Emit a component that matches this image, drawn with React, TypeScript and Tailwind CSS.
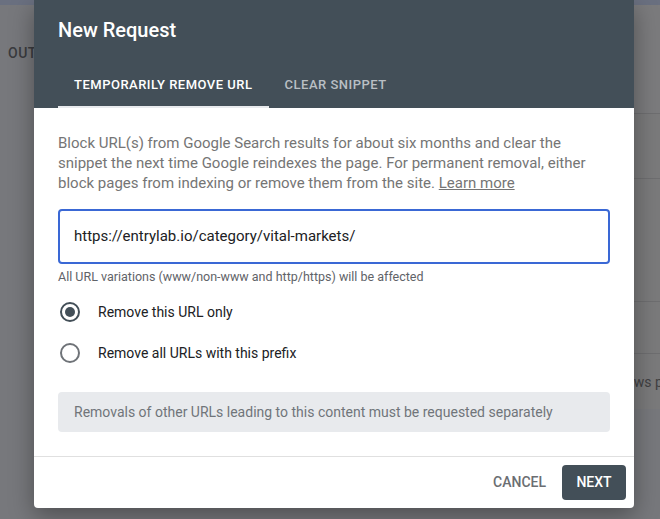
import { useState } from "react"

const font = { fontFamily: "Roboto, 'Noto Sans', Arial, sans-serif" }

const options = [
  { id: "url", label: "Remove this URL only" },
  { id: "prefix", label: "Remove all URLs with this prefix" },
]

const Radio = ({ checked }: { checked: boolean }) => (
  <span
    className={
      checked
        ? "flex size-5 items-center justify-center rounded-full border-2 border-[#434f58]"
        : "flex size-5 items-center justify-center rounded-full border-2 border-[#6f7378]"
    }
  >
    {checked ? <span className="size-2.5 rounded-full bg-[#434f58]" /> : null}
  </span>
)

const Backdrop = () => (
  <div className="flex h-full flex-col bg-[#77787c]">
    <div className="h-[5px] bg-[#6a7080]" />
    <div className="flex flex-1">
      <div className="w-[200px] pl-2 pt-[38px]">
        <p className="text-[14px] font-medium tracking-[0.5px] text-[#3a3b3e]">
          OUTDATED CONTENT
        </p>
      </div>
      <div className="ml-auto flex w-[260px] flex-col">
        <div className="h-[108px] bg-[#7b7b7d]" />
        <div className="h-[65px] border-t border-[#6e6e70] bg-[#7a7a7b]" />
        <div className="h-[123px] border-t border-[#6e6e70] bg-[#7a7a7b]" />
        <div className="h-[52px] border-t border-[#6e6e70] bg-[#7a7a7b]" />
        <div className="h-[56px] overflow-hidden whitespace-nowrap border-t border-[#6e6e70] bg-[#7a7a7b] pl-[214px] pt-[18px] text-[14px] text-[#404042]">
          Views per
        </div>
      </div>
    </div>
  </div>
)

export default function App() {
  const [choice, setChoice] = useState("url")

  return (
    <div style={font} className="relative h-[519px] w-[660px] overflow-hidden">
      <Backdrop />

      <div className="absolute left-[34px] top-0 w-[600px] overflow-hidden rounded-b bg-white shadow-[0_8px_24px_rgba(0,0,0,0.35)]">
        <div className="bg-[#434f58] px-6 pt-4">
          <h2 className="h-7 text-[20px] font-medium leading-7 text-white">
            New Request
          </h2>
          <div className="mt-4 flex h-12">
            <button className="relative px-4 pt-px text-[13px] font-medium tracking-[0.5px] text-white">
              TEMPORARILY REMOVE URL
              <span className="absolute inset-x-0 bottom-0 h-[2px] bg-[#e8eaed]" />
            </button>
            <button className="px-4 pt-px text-[13px] font-medium tracking-[0.5px] text-[#b9bfc4]">
              CLEAR SNIPPET
            </button>
          </div>
        </div>

        <div className="px-6 pb-6 pt-[25px]">
          <p className="text-[15px] leading-5 text-[#757575]">
            Block URL(s) from Google Search results for about six months and clear the
            <br />
            snippet the next time Google reindexes the page. For permanent removal, either
            <br />
            block pages from indexing or remove them from the site.{" "}
            <a className="underline">Learn more</a>
          </p>

          <div className="mt-4 flex h-[55px] items-center rounded border-2 border-[#3a68d5] px-[14px] text-[15px] text-[#202124]">
            https://entrylab.io/category/vital-markets/
          </div>
          <p className="mt-[5px] text-[12.5px] leading-4 text-[#5f6368]">
            All URL variations (www/non-www and http/https) will be affected
          </p>

          <div className="mt-[7px] flex flex-col gap-px">
            {options.map((option) => (
              <label
                key={option.id}
                onClick={() => setChoice(option.id)}
                className="flex h-10 cursor-pointer items-center gap-[18px] pl-[2px] text-[14px] text-[#202124]"
              >
                <Radio checked={choice === option.id} />
                {option.label}
              </label>
            ))}
          </div>

          <div className="mt-[19px] flex h-10 items-center rounded bg-[#e8eaed] px-4 text-[14px] text-[#70757a]">
            Removals of other URLs leading to this content must be requested separately
          </div>
        </div>

        <div className="flex items-center justify-end gap-2 border-t border-[#e0e0e0] p-2">
          <button className="h-[35px] px-2 text-[14px] font-medium text-[#6b6e72]">
            CANCEL
          </button>
          <button className="h-[35px] w-16 rounded bg-[#434f58] text-[14px] font-medium text-white">
            NEXT
          </button>
        </div>
      </div>
    </div>
  )
}
